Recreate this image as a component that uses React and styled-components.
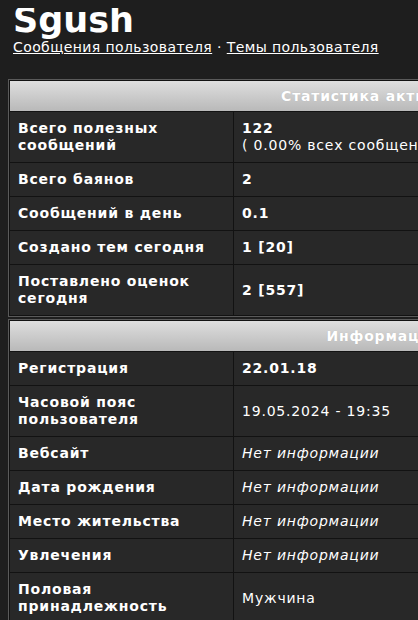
import React from "react";
import styled, { createGlobalStyle } from "styled-components";

const Global = createGlobalStyle`
  html { overflow: hidden; }
  body {
    margin: 8px 0 8px 8px;
    overflow: visible !important;
    background: #1e1e1e;
    color: #fff;
    font-family: "DejaVu Sans", Verdana, sans-serif;
    font-size: 14px;
  }
  #root { overflow: visible !important; }
`;

const Intro = styled.div`
  padding: 0 5px;
`;

const Title = styled.h1`
  margin: -10px 0 0;
  font-size: 35px;
  line-height: 44px;
  font-weight: bold;
  color: #fff;
`;

const Links = styled.div`
  font-size: 14px;
  line-height: 18px;
  letter-spacing: 0.4px;
  margin-top: -4px;
  a { color: #fff; text-decoration: underline; }
`;

const Stack = styled.div`
  margin-top: 23px;
  display: flex;
  flex-direction: column;
  gap: 2px;
  width: 750px;
`;

const Table = styled.table`
  width: 100%;
  border: 1px solid #5a5a5a;
  background: #121212;
  border-spacing: 1px;
  border-collapse: separate;
`;

const Head = styled.th`
  height: 30px;
  padding: 0;
  background: linear-gradient(#dedede, #b9b9b9);
  color: #fff;
  font-weight: bold;
  font-size: 14px;
  letter-spacing: 0.8px;
  text-align: center;
  text-shadow: 0 0 1px rgba(0,0,0,0.12);
`;

const Label = styled.td`
  width: 207px;
  background: #282828;
  padding: 8px;
  line-height: 17px;
  font-weight: bold;
  letter-spacing: 0.8px;
  vertical-align: middle;
`;

const Value = styled.td`
  background: #282828;
  padding: 8px;
  line-height: 17px;
  vertical-align: middle;
  letter-spacing: 0.8px;
  font-size: 14px;
  font-weight: ${(p) => (p.$bold ? "bold" : "normal")};
  font-style: ${(p) => (p.$italic ? "italic" : "normal")};
`;

const Sub = styled.span`
  font-weight: normal;
`;

const stats = [
  ["Всего полезных сообщений", <>122<br /><Sub>( 0.00% всех сообщений )</Sub></>, { $bold: true }],
  ["Всего баянов", "2", { $bold: true }],
  ["Сообщений в день", "0.1", { $bold: true }],
  ["Создано тем сегодня", "1 [20]", { $bold: true }],
  ["Поставлено оценок сегодня", "2 [557]", { $bold: true }],
];

const info = [
  ["Регистрация", "22.01.18", { $bold: true }],
  ["Часовой пояс пользователя", "19.05.2024 - 19:35", {}],
  ["Вебсайт", "Нет информации", { $italic: true }],
  ["Дата рождения", "Нет информации", { $italic: true }],
  ["Место жительства", "Нет информации", { $italic: true }],
  ["Увлечения", "Нет информации", { $italic: true }],
  ["Половая принадлежность", "Мужчина", {}],
];

function InfoTable({ title, rows }) {
  return (
    <Table>
      <thead>
        <tr><Head colSpan={2}>{title}</Head></tr>
      </thead>
      <tbody>
        {rows.map(([l, v, p]) => (
          <tr key={l}>
            <Label>{l}</Label>
            <Value {...p}>{v}</Value>
          </tr>
        ))}
      </tbody>
    </Table>
  );
}

export default function App() {
  return (
    <>
      <Global />
      <Intro>
        <Title>Sgush</Title>
        <Links>
          <a href="#">Сообщения пользователя</a> · <a href="#">Темы пользователя</a>
        </Links>
      </Intro>
      <Stack>
        <InfoTable title="Статистика активности" rows={stats} />
        <InfoTable title="Информация" rows={info} />
      </Stack>
    </>
  );
}
